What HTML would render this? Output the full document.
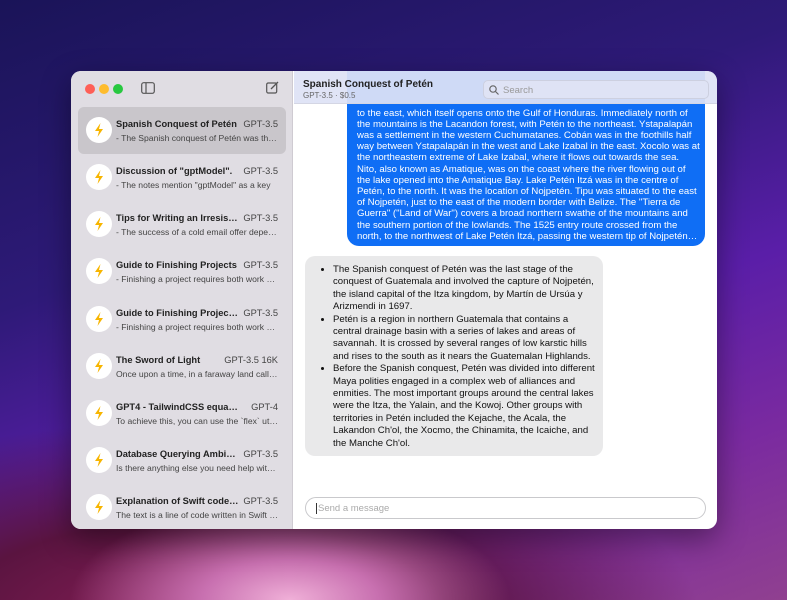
<!DOCTYPE html><html><head><style>
*{margin:0;padding:0;box-sizing:border-box}
body{width:787px;height:600px;overflow:hidden;font-family:"Liberation Sans",sans-serif;position:relative;
background:radial-gradient(ellipse 220px 100px at 290px 600px,#f0b0d8 0%,#c870b0 40%,transparent 100%),radial-gradient(ellipse 500px 200px at 200px 620px,#8a2058 0%,#5a1440 50%,transparent 100%),linear-gradient(160deg,#1a1458 0%,#2e1a78 35%,#5a1ea8 60%,#7a2aa0 80%,#904090 100%)}
.win{position:absolute;left:71px;top:71px;width:646px;height:458px;border-radius:10px;overflow:hidden;background:#fff;box-shadow:0 10px 30px rgba(0,0,0,.4)}
.side{position:absolute;left:0;top:0;width:222px;height:100%;background:#e0dde3;border-right:1px solid #cfcbd2}
.dot{position:absolute;top:13px;width:10px;height:10px;border-radius:50%}
.item{position:absolute;left:7px;width:208px;height:47px;border-radius:6px}
.item.sel{background:#c9c6cb}
.ic{position:absolute;left:8px;top:10px;width:26px;height:26px;border-radius:50%;background:#fff}
.ic svg{position:absolute;left:8px;top:6px}
.t{position:absolute;left:38px;top:12px;width:124px;font-size:9.3px;font-weight:bold;color:#222;white-space:nowrap;overflow:hidden;text-overflow:ellipsis}
.m{position:absolute;right:8px;top:12px;font-size:9.3px;color:#444}
.p{position:absolute;left:38px;top:26px;width:162px;font-size:8.6px;color:#444;white-space:nowrap;overflow:hidden;text-overflow:ellipsis}
.hdr{position:absolute;left:223px;top:0;right:0;height:33px;background:rgba(222,226,245,.93);border-bottom:1px solid #d4d6e4;z-index:2}
.blue{position:absolute;left:276px;top:-20px;width:358px;height:195px;background:#0f6ef5;border-radius:12px;color:#fff;font-size:9.6px;line-height:11.2px;overflow:hidden;white-space:nowrap}
.blue div{position:absolute;left:10px;bottom:4px}
.gray{position:absolute;left:234px;top:185px;width:298px;height:200px;background:#e9e9ea;border-radius:10px;color:#111;font-size:9.6px;line-height:12.4px;padding:8px 0 0 28px;white-space:nowrap}
.inp{position:absolute;left:234px;top:426px;width:401px;height:22px;border:1px solid #c9c9cc;border-radius:11px;font-size:9.5px;color:#aaa;padding:5px 10px}
</style></head><body>
<div class="win">
<div class="side">
<div class="dot" style="left:14px;background:#fe5f57"></div>
<div class="dot" style="left:28px;background:#febc2e"></div>
<div class="dot" style="left:42px;background:#28c840"></div>
<svg style="position:absolute;left:70px;top:11px" width="14" height="12"><rect x=".7" y=".7" width="12.6" height="10.6" rx="2" fill="none" stroke="#555" stroke-width="1.2"/><line x1="5" y1="1" x2="5" y2="11" stroke="#555" stroke-width="1.2"/></svg>
<svg style="position:absolute;left:195px;top:10px" width="13" height="13"><rect x=".7" y="2" width="10" height="10" rx="1.5" fill="none" stroke="#555" stroke-width="1.2"/><path d="M5 8 L12 1" stroke="#555" stroke-width="1.3"/></svg>
<div class="item sel" style="top:36px"><div class="ic"><svg width="10" height="14"><path d="M6.5 0 L1 8 H5 L3.5 14 L9 6 H5 Z" fill="#f7b500"/></svg></div><div class="t">Spanish Conquest of Petén</div><div class="m">GPT-3.5</div><div class="p">- The Spanish conquest of Petén was the last</div></div>
<div class="item" style="top:83px"><div class="ic"><svg width="10" height="14"><path d="M6.5 0 L1 8 H5 L3.5 14 L9 6 H5 Z" fill="#f7b500"/></svg></div><div class="t">Discussion of "gptModel".</div><div class="m">GPT-3.5</div><div class="p">- The notes mention "gptModel" as a key</div></div>
<div class="item" style="top:130px"><div class="ic"><svg width="10" height="14"><path d="M6.5 0 L1 8 H5 L3.5 14 L9 6 H5 Z" fill="#f7b500"/></svg></div><div class="t">Tips for Writing an Irresistible</div><div class="m">GPT-3.5</div><div class="p">- The success of a cold email offer depends</div></div>
<div class="item" style="top:177px"><div class="ic"><svg width="10" height="14"><path d="M6.5 0 L1 8 H5 L3.5 14 L9 6 H5 Z" fill="#f7b500"/></svg></div><div class="t">Guide to Finishing Projects</div><div class="m">GPT-3.5</div><div class="p">- Finishing a project requires both work and</div></div>
<div class="item" style="top:225px"><div class="ic"><svg width="10" height="14"><path d="M6.5 0 L1 8 H5 L3.5 14 L9 6 H5 Z" fill="#f7b500"/></svg></div><div class="t">Guide to Finishing Projects of</div><div class="m">GPT-3.5</div><div class="p">- Finishing a project requires both work and</div></div>
<div class="item" style="top:272px"><div class="ic"><svg width="10" height="14"><path d="M6.5 0 L1 8 H5 L3.5 14 L9 6 H5 Z" fill="#f7b500"/></svg></div><div class="t" style="width:105px">The Sword of Light</div><div class="m">GPT-3.5 16K</div><div class="p">Once upon a time, in a faraway land called</div></div>
<div class="item" style="top:319px"><div class="ic"><svg width="10" height="14"><path d="M6.5 0 L1 8 H5 L3.5 14 L9 6 H5 Z" fill="#f7b500"/></svg></div><div class="t">GPT4 - TailwindCSS equal-width</div><div class="m">GPT-4</div><div class="p">To achieve this, you can use the `flex` utility</div></div>
<div class="item" style="top:366px"><div class="ic"><svg width="10" height="14"><path d="M6.5 0 L1 8 H5 L3.5 14 L9 6 H5 Z" fill="#f7b500"/></svg></div><div class="t">Database Querying Ambiguity</div><div class="m">GPT-3.5</div><div class="p">Is there anything else you need help with today</div></div>
<div class="item" style="top:413px"><div class="ic"><svg width="10" height="14"><path d="M6.5 0 L1 8 H5 L3.5 14 L9 6 H5 Z" fill="#f7b500"/></svg></div><div class="t">Explanation of Swift code line</div><div class="m">GPT-3.5</div><div class="p">The text is a line of code written in Swift that</div></div>
</div>
<div class="hdr">
<div style="position:absolute;left:9px;top:8px;font-size:10px;font-weight:bold;color:#222">Spanish Conquest of Petén</div>
<div style="position:absolute;left:9px;top:20px;font-size:8px;color:#666">GPT-3.5 · $0.5</div>
<div style="position:absolute;left:189px;top:9px;width:226px;height:19px;border:1px solid #cdd0e0;border-radius:5px;background:#dfe3f5;font-size:9.5px;color:#999;padding:4px 0 0 19px">Search<svg style="position:absolute;left:5px;top:4px" width="10" height="10"><circle cx="4" cy="4" r="3.2" fill="none" stroke="#666" stroke-width="1.2"/><line x1="6.5" y1="6.5" x2="9.5" y2="9.5" stroke="#666" stroke-width="1.2"/></svg></div>
</div>
<div class="blue"><div>to the east, which itself opens onto the Gulf of Honduras. Immediately north of<br>the mountains is the Lacandon forest, with Petén to the northeast. Ystapalapán<br>was a settlement in the western Cuchumatanes. Cobán was in the foothills half<br>way between Ystapalapán in the west and Lake Izabal in the east. Xocolo was at<br>the northeastern extreme of Lake Izabal, where it flows out towards the sea.<br>Nito, also known as Amatique, was on the coast where the river flowing out of<br>the lake opened into the Amatique Bay. Lake Petén Itzá was in the centre of<br>Petén, to the north. It was the location of Nojpetén. Tipu was situated to the east<br>of Nojpetén, just to the east of the modern border with Belize. The "Tierra de<br>Guerra" ("Land of War") covers a broad northern swathe of the mountains and<br>the southern portion of the lowlands. The 1525 entry route crossed from the<br>north, to the northwest of Lake Petén Itzá, passing the western tip of Nojpetén…</div></div>
<div class="gray"><ul>
<li>The Spanish conquest of Petén was the last stage of the<br>conquest of Guatemala and involved the capture of Nojpetén,<br>the island capital of the Itza kingdom, by Martín de Ursúa y<br>Arizmendi in 1697.</li>
<li>Petén is a region in northern Guatemala that contains a<br>central drainage basin with a series of lakes and areas of<br>savannah. It is crossed by several ranges of low karstic hills<br>and rises to the south as it nears the Guatemalan Highlands.</li>
<li>Before the Spanish conquest, Petén was divided into different<br>Maya polities engaged in a complex web of alliances and<br>enmities. The most important groups around the central lakes<br>were the Itza, the Yalain, and the Kowoj. Other groups with<br>territories in Petén included the Kejache, the Acala, the<br>Lakandon Ch'ol, the Xocmo, the Chinamita, the Icaiche, and<br>the Manche Ch'ol.</li>
</ul></div>
<div class="inp"><span style="border-left:1px solid #333;padding-left:1px">Send a message</span></div>
</div>
</body></html>
